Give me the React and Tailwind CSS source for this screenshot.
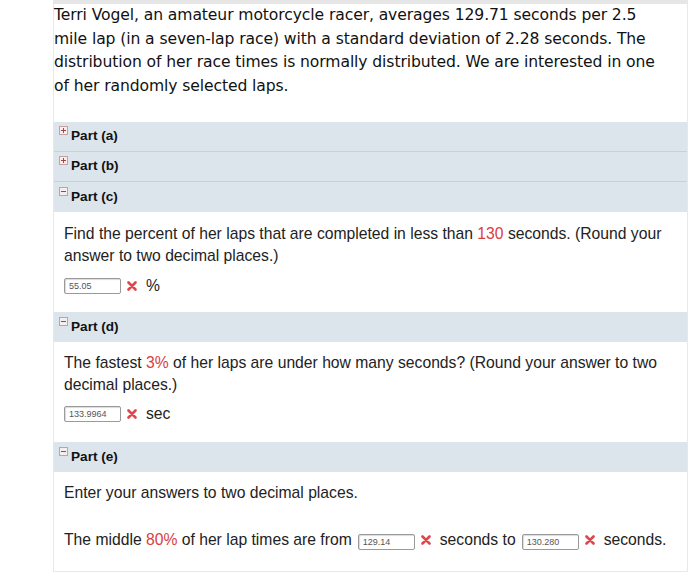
import React from "react";

const sans = "font-['Liberation_Sans',Arial,sans-serif]";

function Toggle({ open }) {
  return (
    <span className="relative top-[-6px] mr-[3px] inline-flex h-[9px] w-[9px] items-center justify-center border border-[#c9a0a0] bg-[#f6eeee]">
      <span className="absolute h-px w-[5px] bg-[#b04040]" />
      {!open && <span className="absolute h-[5px] w-px bg-[#b04040]" />}
    </span>
  );
}

function PartHeader({ label, open, last }) {
  return (
    <div
      className={`flex h-[30px] items-center bg-[#dce4ec] pl-[5px] ${
        last ? "" : "border-b border-[#c8d0d9]"
      }`}
    >
      <Toggle open={open} />
      <span className={`${sans} text-[13.6px] font-bold text-[#111]`}>{label}</span>
    </div>
  );
}

function Cross() {
  return (
    <svg width="10" height="10" viewBox="0 0 10 10" className="ml-[6px] mr-[9px]">
      <path d="M1.5 1.5 L8.5 8.5 M8.5 1.5 L1.5 8.5" stroke="#e0474c" strokeWidth="2.6" strokeLinecap="round" />
    </svg>
  );
}

function Answer({ value, w = "w-[57px]" }) {
  return (
    <span
      className={`inline-flex h-[16px] ${w} items-center rounded-[2px] border border-[#9a9a9a] bg-white pl-[4px] text-[9px] text-[#555] shadow-[inset_1px_1px_1px_rgba(0,0,0,0.15)]`}
    >
      {value}
    </span>
  );
}

const Red = ({ children }) => <span className="text-[#d9403e]">{children}</span>;

export default function App() {
  return (
    <div className="h-[574px] w-[700px] overflow-hidden bg-white">
      <div className="ml-[53px] w-[635px] border-x border-b border-[#e8e8e8] border-t-4 border-t-[#e6e6e6]">
        <p className="whitespace-nowrap font-['DejaVu_Sans',sans-serif] text-[15.6px] leading-[23.5px] tracking-[-0.1px] text-[#111]">
          Terri Vogel, an amateur motorcycle racer, averages 129.71 seconds per 2.5
          <br />
          mile lap (in a seven-lap race) with a standard deviation of 2.28 seconds. The
          <br />
          distribution of her race times is normally distributed. We are interested in one
          <br />
          of her randomly selected laps.
        </p>

        <div className="mt-[24px]">
          <PartHeader label="Part (a)" />
          <PartHeader label="Part (b)" />
          <PartHeader label="Part (c)" open last />
        </div>

        <div className={`${sans} h-[100px] px-[10px] pt-[11px] text-[15.7px] leading-[22px] text-[#222]`}>
          <p>
            Find the percent of her laps that are completed in less than <Red>130</Red> seconds. (Round your
            <br />
            answer to two decimal places.)
          </p>
          <div className="mt-[8px] flex items-center">
            <Answer value="55.05" />
            <Cross />
            <span>%</span>
          </div>
        </div>

        <PartHeader label="Part (d)" open last />

        <div className={`${sans} h-[100px] px-[10px] pt-[10px] text-[15.7px] leading-[22px] text-[#222]`}>
          <p>
            The fastest <Red>3%</Red> of her laps are under how many seconds? (Round your answer to two
            <br />
            decimal places.)
          </p>
          <div className="mt-[7px] flex items-center">
            <Answer value="133.9964" />
            <Cross />
            <span>sec</span>
          </div>
        </div>

        <PartHeader label="Part (e)" open last />

        <div className={`${sans} h-[99px] px-[10px] pt-[10px] text-[15.7px] leading-[22px] text-[#222]`}>
          <p>Enter your answers to two decimal places.</p>
          <div className="mt-[25px] flex items-center whitespace-nowrap">
            <span>
              The middle <Red>80%</Red> of her lap times are from
            </span>
            <span className="ml-[6px]">
              <Answer value="129.14" />
            </span>
            <Cross />
            <span>seconds to</span>
            <span className="ml-[6px]">
              <Answer value="130.280" />
            </span>
            <Cross />
            <span>seconds.</span>
          </div>
        </div>
      </div>
    </div>
  );
}
